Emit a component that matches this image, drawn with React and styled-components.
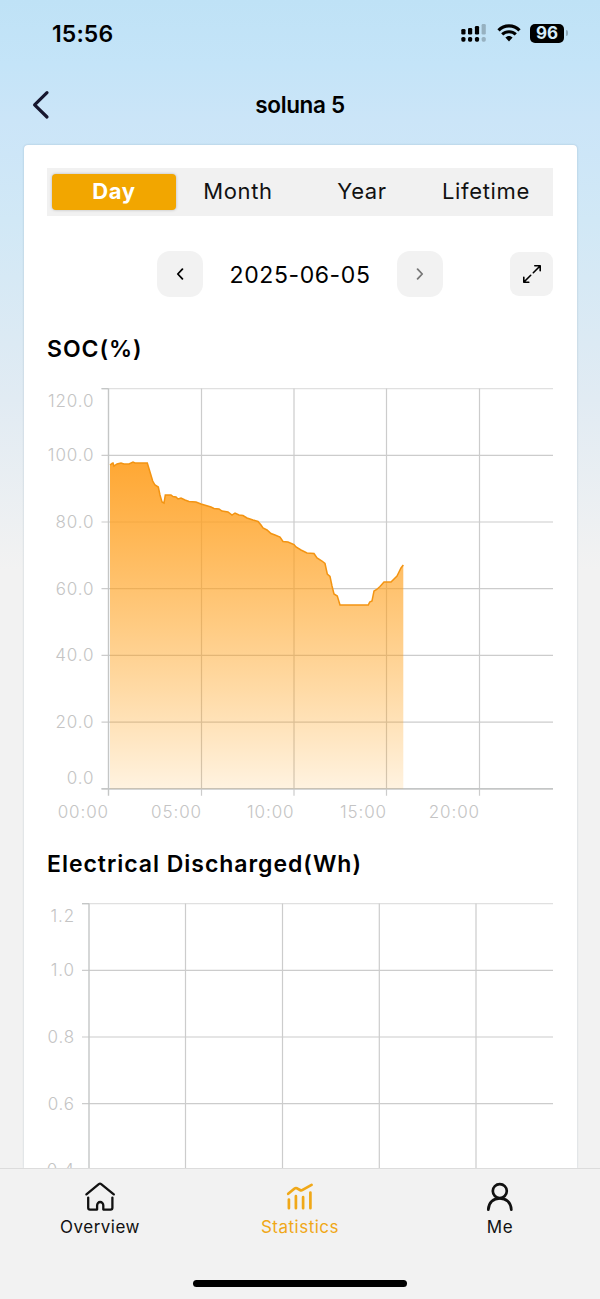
import React from 'react';
import styled, { createGlobalStyle } from 'styled-components';

const tabs = ['Day', 'Month', 'Year', 'Lifetime'];

// [x, y] in chart pixels, one point for each reading
const socPoints = [
  [63, 77], [65, 75.5], [66, 75], [67, 78], [70, 76], [74, 75], [77, 76], [82, 76], [86, 74],
  [88, 75], [100.3, 75], [103, 84], [105.7, 93], [108, 97], [111.3, 99], [113, 107], [115, 114],
  [117, 115], [118.3, 107], [124, 107], [126, 108.5], [129, 109], [131, 111], [134, 110],
  [138, 112], [142, 113.5], [149, 114], [154, 116], [159, 117.5], [164, 119], [167, 120.5],
  [172, 121], [175, 123], [181, 124], [185, 127], [188, 125], [192, 127], [196, 127.5],
  [200, 130], [206, 132], [211, 133.5], [214, 137], [216, 140], [220, 142], [224, 145.5],
  [228, 147], [233, 149], [236, 153.5], [241, 154], [247, 156.5], [249, 159], [254, 162],
  [260, 165], [267, 165.5], [270, 170], [275, 173], [278, 175.5], [280.3, 186], [283, 188.5],
  [285, 198], [287, 206], [290.3, 208], [293, 217], [321.3, 217], [322.7, 214], [325, 213],
  [327, 203], [329.7, 201.5], [333, 198.5], [337, 194], [344, 194], [350, 188], [354, 180],
  [356.3, 177],
];

const charts = [
  {
    title: 'SOC(%)',
    axis: 61.5,
    labelEnd: 47.5,
    columns: [154.5, 247, 339.5, 432.5],
    yLabels: ['120.0', '100.0', '80.0', '60.0', '40.0', '20.0', '0.0'],
    xLabels: ['00:00', '05:00', '10:00', '15:00', '20:00'],
    points: socPoints,
  },
  {
    title: 'Electrical Discharged(Wh)',
    axis: 42,
    labelEnd: 28,
    columns: [138.5, 235.5, 332.3, 429],
    yLabels: ['1.2', '1.0', '0.8', '0.6', '0.4'],
    xLabels: [],
    points: [],
  },
];

const labelOffset = (i) => {
  if (i === 0) return 18;
  if (i === 6) return -5;
  return 6;
};

const Chart = ({ chart }) => {
  const { axis, labelEnd, columns, yLabels, xLabels, points } = chart;
  const step = 66.7;
  const top = 0.6;
  const bottom = step * 6 + top;
  const line = points.map((p) => p.join(',')).join(' ');
  return (
    <Plot viewBox="0 0 506 440">
      <defs>
        <linearGradient id="area" x1="0" y1="74" x2="0" y2={bottom} gradientUnits="userSpaceOnUse">
          <stop offset="0" stopColor="#ffa227" stopOpacity="0.94" />
          <stop offset="1" stopColor="#ff9800" stopOpacity="0.12" />
        </linearGradient>
      </defs>
      {yLabels.map((label, i) => (
        <g key={label}>
          <GridLine x1={axis - 7} x2="506" y1={top + i * step} y2={top + i * step} $soft={i === 0} />
          <AxisText x={labelEnd} y={top + i * step + labelOffset(i)}>
            {label}
          </AxisText>
        </g>
      ))}
      {columns.map((x) => (
        <GridLine key={x} x1={x} x2={x} y1={top} y2={bottom + 7} />
      ))}
      <AxisLine x1={axis} x2={axis} y1={top} y2={bottom + 7} />
      <AxisLine x1={axis - 7} x2="506" y1={bottom} y2={bottom} />
      <AxisLine x1={axis - 7} x2={axis} y1={top} y2={top} />
      {points.length > 0 && (
        <>
          <polygon points={`63,${bottom} ${line} 356.3,${bottom}`} fill="url(#area)" />
          <polyline points={line} fill="none" stroke="#f39412" strokeWidth="1.5" />
        </>
      )}
      {xLabels.map((label, i) => (
        <AxisText key={label} x={[axis, ...columns][i] + 0.5} y={bottom + 29.4}>
          {label}
        </AxisText>
      ))}
    </Plot>
  );
};

const HomeIcon = () => (
  <Icon width="32" height="32" viewBox="0 0 32 32" $stroke={2.3}>
    <path d="M2.4 13.4 L14.8 3.1 Q16 2.2 17.2 3.1 L29.8 13.4" />
    <path d="M4.2 16.6 V26.8 Q4.2 28.6 6 28.6 H13.1 V24.4 A3.1 3.4 0 0 1 19.3 24.4 V28.6 H26.6 Q28.4 28.6 28.4 26.8 V16.6" />
  </Icon>
);

const StatsIcon = () => (
  <Icon width="32" height="32" viewBox="0 0 32 32" $stroke={2.7}>
    <path d="M4.2 12.8 L10.6 7.5 Q11.7 6.7 13 7.3 L16 9 Q17.3 9.7 18.6 8.9 L27.6 3.8" />
    <path d="M4.9 18.6 V27.2 M11.9 15.2 V27.2 M19.1 16.2 V27.2 M26.4 11.6 V27.2" />
  </Icon>
);

const UserIcon = () => (
  <Icon width="32" height="32" viewBox="0 0 32 32" $stroke={2.7}>
    <circle cx="15.8" cy="10.1" r="7" />
    <path d="M4.3 28.6 C4.6 21.4 9.4 17.3 15.8 17.3 C22.2 17.3 27 21.4 27.3 28.6" />
  </Icon>
);

const App = () => {
  return (
    <>
      <GlobalStyle />
      <Screen>
        <StatusBar>
          <Time>15:56</Time>
          <StatusIcons>
            <svg width="26" height="18" viewBox="0 0 26 18">
              <rect x="0.3" y="5" width="4.2" height="5.5" rx="1.3" />
              <rect x="7" y="4" width="4.2" height="6.5" rx="1.3" />
              <rect x="13.9" y="2" width="4.2" height="8.5" rx="1.3" />
              <rect x="20.6" y="0" width="4.2" height="10.5" rx="1.3" opacity="0.22" />
              <rect x="0.3" y="13" width="4.2" height="4.7" rx="1.6" />
              <rect x="7" y="13" width="4.2" height="4.7" rx="1.6" />
              <rect x="13.9" y="13" width="4.2" height="4.7" rx="1.6" />
              <rect x="20.6" y="13" width="4.2" height="4.7" rx="1.6" opacity="0.22" />
            </svg>
            <svg width="24" height="18" viewBox="0 0 24 18">
              <path d="M1.5 6.3 C7.3 0.5 16.7 0.5 22.5 6.3" fill="none" stroke="#000" strokeWidth="3.2" />
              <path d="M5.2 10.4 C9 6.7 15 6.7 18.8 10.4" fill="none" stroke="#000" strokeWidth="3" />
              <path d="M8.4 13.6 C10.3 11.5 13.7 11.5 15.6 13.6 L12 17.4 Z" />
            </svg>
            <Battery>
              <Charge>96</Charge>
              <Cap />
            </Battery>
          </StatusIcons>
        </StatusBar>

        <Header>
          <Back>
            <svg width="18" height="30" viewBox="0 0 18 30">
              <path
                d="M15 2.6 L2.6 14.8 L15 27"
                fill="none"
                stroke="#17172f"
                strokeWidth="3.2"
                strokeLinecap="round"
                strokeLinejoin="round"
              />
            </svg>
          </Back>
          <Title>soluna 5</Title>
          <span />
        </Header>

        <Card>
          <Tabs>
            {tabs.map((tab) => (
              <Tab key={tab} $active={tab === 'Day'}>
                {tab}
              </Tab>
            ))}
          </Tabs>
          <DateRow>
            <span />
            <DatePicker>
              <SquareButton>
                <Icon width="8" height="12" viewBox="0 0 8 12" $stroke={1.8}>
                  <path d="M6.4 1.2 L1.8 6 L6.4 10.8" />
                </Icon>
              </SquareButton>
              <DateText>2025-06-05</DateText>
              <SquareButton $disabled>
                <Icon width="8" height="12" viewBox="0 0 8 12" $stroke={1.8}>
                  <path d="M1.6 1.2 L6.2 6 L1.6 10.8" />
                </Icon>
              </SquareButton>
            </DatePicker>
            <SquareButton $small>
              <Icon width="20" height="20" viewBox="0 0 20 20" $stroke={1.6}>
                <path d="M12.8 1.8 H18.2 V6.8 M17.8 2.2 L11.3 8.7 M8.7 11.3 L2.2 17.8 M1.8 13.2 V18.2 H6.8" />
              </Icon>
            </SquareButton>
          </DateRow>
          {charts.map((chart) => (
            <Section key={chart.title}>
              <ChartTitle>{chart.title}</ChartTitle>
              <Chart chart={chart} />
            </Section>
          ))}
        </Card>

        <TabBar>
          <NavItems>
            <NavItem>
              <HomeIcon />
              Overview
            </NavItem>
            <NavItem $active>
              <StatsIcon />
              Statistics
            </NavItem>
            <NavItem>
              <UserIcon />
              Me
            </NavItem>
          </NavItems>
          <HomeIndicator />
        </TabBar>
      </Screen>
    </>
  );
};

export default App;

const GlobalStyle = createGlobalStyle`
  * {
    box-sizing: border-box;
  }
  body {
    margin: 0;
    font-family: Inter, 'Liberation Sans', sans-serif;
    color: #000;
  }
`;

const Screen = styled.div`
  width: 600px;
  height: 1299px;
  display: flex;
  flex-direction: column;
  overflow: hidden;
  background: linear-gradient(
    #bfe2f6 0,
    #c4e4f8 64px,
    #cbe5f8 120px,
    #d1e8f6 220px,
    #e1ebf3 400px,
    #f2f2f2 570px
  );
`;

const StatusBar = styled.div`
  height: 64px;
  flex-shrink: 0;
  padding: 2px 32px 0 52px;
  display: flex;
  align-items: center;
  justify-content: space-between;
`;

const Time = styled.div`
  padding-top: 1px;
  font-size: 23px;
  font-weight: 600;
  letter-spacing: 0.1px;
`;

const StatusIcons = styled.div`
  display: flex;
  align-items: center;
  gap: 9.5px;
`;

const Battery = styled.div`
  display: flex;
  align-items: center;
  gap: 2px;
`;

const Charge = styled.div`
  width: 34px;
  height: 19px;
  border-radius: 5px;
  background: #000;
  color: #d6edfb;
  font-size: 17px;
  line-height: 19px;
  font-weight: 700;
  text-align: center;
`;

const Cap = styled.div`
  width: 2px;
  height: 6px;
  border-radius: 0 2px 2px 0;
  background: #8fa9b9;
`;

const Header = styled.div`
  height: 81px;
  flex-shrink: 0;
  padding: 0 32px;
  display: grid;
  grid-template-columns: 1fr auto 1fr;
  align-items: center;
`;

const Back = styled.div`
  display: flex;
`;

const Title = styled.h1`
  margin: 0;
  font-size: 22.5px;
  font-weight: 600;
  letter-spacing: -0.35px;
`;

const Card = styled.div`
  height: 1023px;
  flex-shrink: 0;
  margin: 0 23.5px;
  padding: 23px 23.5px 0;
  overflow: hidden;
  border-radius: 4px 4px 0 0;
  background: #fff;
  box-shadow: 0 0 2px rgba(60, 90, 120, 0.3);
`;

const Tabs = styled.div`
  height: 48px;
  padding: 6px 5px;
  display: grid;
  grid-template-columns: repeat(4, 1fr);
  background: #f1f1f1;
`;

const Tab = styled.div`
  height: 36px;
  border-radius: 4px;
  text-align: center;
  font-size: 22px;
  line-height: 34px;
  letter-spacing: ${(props) => (props.$active ? 0.7 : 0.65)}px;
  font-weight: ${(props) => (props.$active ? 700 : 400)};
  color: ${(props) => (props.$active ? '#fff' : '#111')};
  background: ${(props) => (props.$active ? '#f2a600' : 'transparent')};
  box-shadow: ${(props) => (props.$active ? '0 0 3px rgba(0, 0, 0, 0.25)' : 'none')};
`;

const DateRow = styled.div`
  margin-top: 35px;
  height: 46px;
  display: grid;
  grid-template-columns: 1fr auto 1fr;
  align-items: center;
`;

const DatePicker = styled.div`
  width: 286px;
  display: flex;
  align-items: center;
  justify-content: space-between;
`;

const SquareButton = styled.div`
  width: ${(props) => (props.$small ? 43 : 46)}px;
  height: ${(props) => (props.$small ? 44 : 46)}px;
  border-radius: ${(props) => (props.$small ? 9 : 13)}px;
  justify-self: end;
  display: flex;
  align-items: center;
  justify-content: center;
  background: #f2f2f2;
  color: ${(props) => (props.$disabled ? '#777' : '#000')};
`;

const DateText = styled.div`
  padding-top: 1px;
  font-size: 23px;
  letter-spacing: 0.6px;
`;

const Section = styled.section`
  height: 514.5px;
  padding-top: 38px;
`;

const ChartTitle = styled.h2`
  margin: 0 0 25px;
  font-size: 23px;
  line-height: 28px;
  font-weight: 600;
  letter-spacing: 0.97px;
`;

const Plot = styled.svg`
  display: block;
  width: 506px;
  height: 440px;
`;

const GridLine = styled.line`
  stroke: ${(props) => (props.$soft ? '#e0e0e0' : '#cccccc')};
  stroke-width: 1.2px;
`;

const AxisLine = styled.line`
  stroke: #c4c6c6;
  stroke-width: 1.4px;
`;

const AxisText = styled.text`
  fill: #c4c4c4;
  font-size: 17px;
  font-weight: 300;
  letter-spacing: 0.9px;
  text-anchor: end;
`;

const Icon = styled.svg`
  fill: none;
  stroke: currentColor;
  stroke-width: ${(props) => props.$stroke};
  stroke-linecap: round;
  stroke-linejoin: round;
`;

const TabBar = styled.div`
  height: 131px;
  flex-shrink: 0;
  padding-bottom: 12px;
  display: flex;
  flex-direction: column;
  align-items: center;
  justify-content: space-between;
  border-top: 1px solid #dcdcdc;
  background: #f2f2f2;
`;

const NavItems = styled.div`
  width: 100%;
  padding-top: 12px;
  display: grid;
  grid-template-columns: repeat(3, 1fr);
`;

const NavItem = styled.div`
  display: flex;
  flex-direction: column;
  align-items: center;
  gap: 3px;
  font-size: 17px;
  line-height: 22px;
  letter-spacing: 0.5px;
  color: ${(props) => (props.$active ? '#f0a818' : '#111')};
`;

const HomeIndicator = styled.div`
  width: 214px;
  height: 7px;
  border-radius: 4px;
  background: #000;
`;
